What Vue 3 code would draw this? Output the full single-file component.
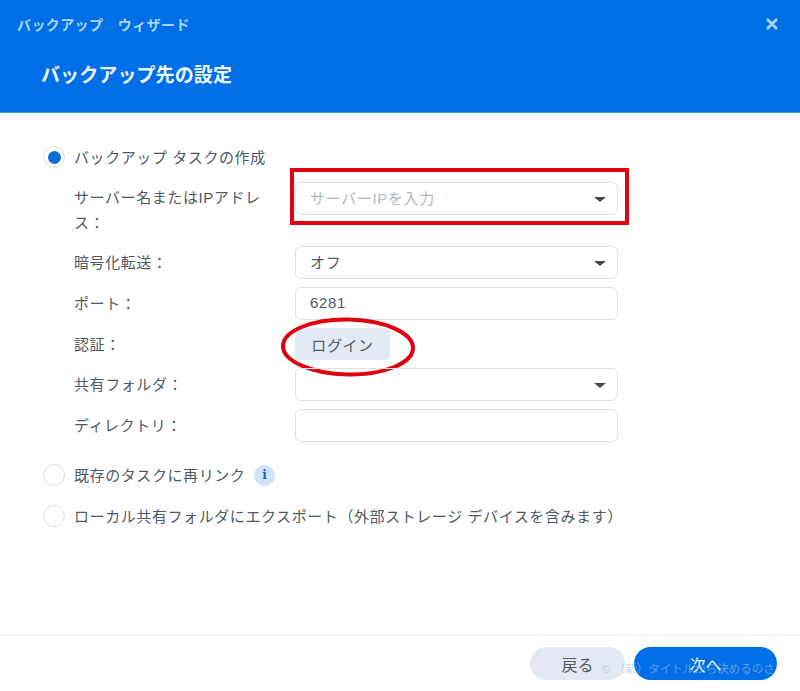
<script setup>
const rows = [
  { label: '暗号化転送：', value: 'オフ', select: true },
  { label: 'ポート：', value: '6281', select: false },
]
</script>

<template>
  <div class="wizard">
    <header class="head">
      <div class="top">
        <span class="app">バックアップ　ウィザード</span>
        <svg class="close" viewBox="0 0 14 14" width="14" height="14"><path d="M2 2 L12 12 M12 2 L2 12" stroke="#a5d4fb" stroke-width="2.8" fill="none" /></svg>
      </div>
      <h1 class="title">バックアップ先の設定</h1>
    </header>

    <main class="body">
      <div class="option">
        <span class="radio on"></span>
        <span class="txt">バックアップ タスクの作成</span>
      </div>

      <div class="form">
        <div class="row first">
          <label class="lab">サーバー名またはIPアドレス：</label>
          <div class="field">
            <span class="ph">サーバーIPを入力</span>
            <i class="caret"></i>
            <div class="redbox"></div>
          </div>
        </div>
        <div v-for="r in rows" :key="r.label" class="row">
          <label class="lab">{{ r.label }}</label>
          <div class="field">
            <span>{{ r.value }}</span>
            <i v-if="r.select" class="caret"></i>
          </div>
        </div>
        <div class="row auth">
          <label class="lab">認証：</label>
          <div class="loginwrap">
            <button class="login">ログイン</button>
            <svg class="ring" viewBox="0 0 136 62" width="136" height="62"><ellipse cx="68" cy="31" rx="65" ry="27.5" fill="none" stroke="#e0000f" stroke-width="4" transform="rotate(1 68 31)" /></svg>
          </div>
        </div>
        <div class="row">
          <label class="lab">共有フォルダ：</label>
          <div class="field"><i class="caret"></i></div>
        </div>
        <div class="row">
          <label class="lab">ディレクトリ：</label>
          <div class="field"></div>
        </div>
      </div>

      <div class="option second">
        <span class="radio"></span>
        <span class="txt">既存のタスクに再リンク</span>
        <span class="info">i</span>
      </div>
      <div class="option third">
        <span class="radio"></span>
        <span class="txt">ローカル共有フォルダにエクスポート（外部ストレージ デバイスを含みます）</span>
      </div>
    </main>

    <footer class="foot">
      <button class="btn back">戻る</button>
      <button class="btn next">次へ</button>
      <span class="mark">© （新）タイトルから決めるのさ</span>
    </footer>
  </div>
</template>

<style>
html, body { margin: 0; background: #fff; }
</style>

<style scoped>
.wizard {
  width: 800px;
  height: 691px;
  display: flex;
  flex-direction: column;
  overflow: hidden;
  font-family: "Liberation Sans", "Noto Sans CJK JP", sans-serif;
  font-size: 15px;
  letter-spacing: 0.58px;
  color: #4f5a63;
  background: #fff;
}
.head {
  height: 113px;
  flex: none;
  box-sizing: border-box;
  background: #006ee6;
  border-bottom: 1px solid #2e9fd0;
  padding: 14px 21px 0 17px;
}
.top { display: flex; justify-content: space-between; align-items: center; height: 20px; }
.app { font-size: 14px; font-weight: 700; color: #a9d6f8; letter-spacing: 0.4px; }
.title {
  margin: 30px 0 0 24px;
  font-size: 19px;
  line-height: 24px;
  font-weight: 700;
  color: #eef8ff;
  letter-spacing: 0.1px;
}
.body { flex: 1; padding: 32px 0 0 43px; min-height: 0; }
.option { display: flex; align-items: center; height: 24px; }
.txt { padding-bottom: 2px; }
.radio {
  width: 20px;
  height: 20px;
  flex: none;
  margin-right: 9px;
  border: 1px solid #d9dfe6;
  border-radius: 50%;
  display: flex;
  align-items: center;
  justify-content: center;
  background: #fff;
}
.radio.on::before {
  content: "";
  width: 13px;
  height: 13px;
  border-radius: 50%;
  background: #0a6fdc;
}
.form { padding-left: 31px; margin-top: 13px; display: flex; flex-direction: column; gap: 8px; }
.row { display: flex; align-items: center; min-height: 33px; }
.row.first { align-items: flex-start; min-height: 56px; }
.row.auth { min-height: 32px; }
.lab { width: 221px; flex: none; line-height: 25px; color: #4f5a63; padding-right: 20px; box-sizing: border-box; }
.first .lab { padding-top: 3px; }
.field {
  position: relative;
  width: 323px;
  height: 33px;
  box-sizing: border-box;
  border: 1px solid #dfe3e8;
  border-radius: 6px;
  padding: 0 14px 2px;
  display: flex;
  align-items: center;
  justify-content: space-between;
  letter-spacing: 0.65px;
}
.ph { color: #b3b8be; }
.caret {
  position: absolute;
  right: 11px;
  top: 14px;
  width: 0;
  height: 0;
  border-left: 6px solid transparent;
  border-right: 6px solid transparent;
  border-top: 5px solid #40474f;
}
.redbox {
  position: absolute;
  left: -6px;
  top: -15px;
  width: 339px;
  height: 57px;
  box-sizing: border-box;
  border: 4.5px solid #e00010;
  pointer-events: none;
}
.loginwrap { position: relative; }
.login {
  display: block;
  width: 95px;
  height: 32px;
  border: 0;
  border-radius: 4px;
  background: #e3eaf3;
  color: #4f5a63;
  font: inherit;
  letter-spacing: 0.6px;
  padding: 0;
}
.ring { position: absolute; left: -15px; top: -12px; pointer-events: none; }
.second { margin-top: 21px; }
.third { margin-top: 17px; }
.info {
  width: 21px;
  height: 21px;
  margin-left: 9px;
  border-radius: 50%;
  background: #cfe4fa;
  color: #0a66c2;
  font: 700 12px/21px "DejaVu Serif", serif;
  text-align: center;
}
.foot {
  position: relative;
  flex: none;
  box-sizing: border-box;
  height: 56px;
  border-top: 1px solid #eceef1;
  display: flex;
  justify-content: flex-end;
  gap: 9px;
  padding: 11px 23px 0 0;
}
.btn {
  height: 33px;
  border: 0;
  border-radius: 17px;
  font: inherit;
  font-size: 16px;
  padding: 0;
}
.back { width: 95px; background: #e3e9f3; color: #4f5a63; }
.next { width: 143px; background: #006ee6; color: #eef8ff; }
.mark {
  position: absolute;
  left: 602px;
  top: 24px;
  font-size: 11.5px;
  letter-spacing: 0;
  white-space: nowrap;
  color: rgba(170, 190, 215, 0.6);
  pointer-events: none;
}
</style>
